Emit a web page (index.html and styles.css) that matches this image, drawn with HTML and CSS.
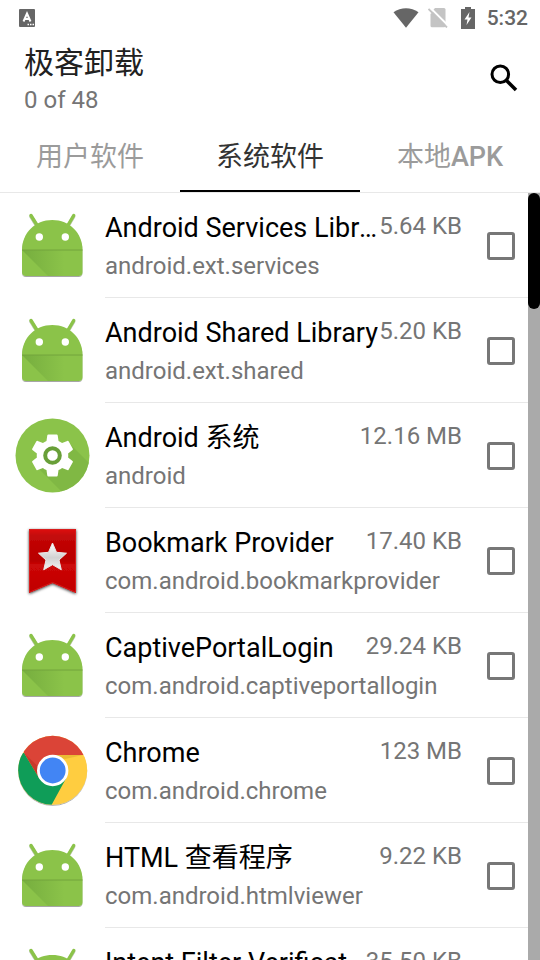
FILE: index.html
```html
<!DOCTYPE html>
<html lang="zh-CN">
<head>
<meta charset="utf-8">
<meta name="viewport" content="width=device-width, initial-scale=1">
<title>极客卸载</title>
<link rel="stylesheet" href="styles.css">
</head>
<body>
<svg class="defs" aria-hidden="true">
  <defs>
    <linearGradient id="fold" x1="0" y1="0" x2="1" y2="0">
      <stop offset="0" stop-color="#33691e" stop-opacity=".24"/>
      <stop offset=".7" stop-color="#33691e" stop-opacity="0"/>
    </linearGradient>
    <linearGradient id="ribbon" x1="0" y1="0" x2="0" y2="1">
      <stop offset="0" stop-color="#e01010"/>
      <stop offset=".1" stop-color="#c40808"/>
      <stop offset=".5" stop-color="#b80000"/>
      <stop offset=".56" stop-color="#cc0808"/>
      <stop offset="1" stop-color="#c00000"/>
    </linearGradient>
    <linearGradient id="silver" x1="0" y1="0" x2="0" y2="1">
      <stop offset="0" stop-color="#ffffff"/>
      <stop offset=".55" stop-color="#d2d2d2"/>
      <stop offset="1" stop-color="#f4f4f4"/>
    </linearGradient>
    <clipPath id="disc"><circle cx="37.5" cy="37.5" r="37"/></clipPath>
    <clipPath id="ball"><circle cx="37.7" cy="37.3" r="34.5"/></clipPath>
    <filter id="shade" x="-20%" y="-20%" width="140%" height="140%">
      <feDropShadow dx="0" dy="1" stdDeviation="1.4" flood-color="#000" flood-opacity=".8"/>
    </filter>
    <filter id="soft" x="-20%" y="-20%" width="140%" height="140%">
      <feDropShadow dx="0" dy="1" stdDeviation=".6" flood-color="#000" flood-opacity=".35"/>
    </filter>
    <symbol id="robot" viewBox="0 0 75 75">
      <g filter="url(#soft)">
        <path d="M16 7.500 22.500 18M58.700 7.500 52.500 18" stroke="#8bc34a" stroke-width="3.400" stroke-linecap="round"/>
        <path d="M7 42C7 25 20 12 37.300 12S67.500 25 67.500 42V64a4 4 0 0 1-4 4H11a4 4 0 0 1-4-4Z" fill="#8bc34a"/>
      </g>
      <path d="M7 42H67.500V64a4 4 0 0 1-4 4H33Z" fill="url(#fold)"/>
      <path d="M7 42H67.500" stroke="#72a43c"/>
      <circle cx="24.300" cy="29" r="3.700" fill="#fff"/>
      <circle cx="50.300" cy="29" r="3.700" fill="#fff"/>
    </symbol>
  </defs>
</svg>

<div class="app">
  <div class="status">
    <svg class="status-note" viewBox="0 0 16 18" aria-hidden="true">
      <rect width="16" height="18" rx="1" fill="#666"/>
      <path d="M4.500 12.500 8 4.500 11.500 12.500M5.800 10H10.200" fill="none" stroke="#fff" stroke-width="2"/>
      <path d="M8.500 15.500h1.500M11 15.500h1.500M13.500 15.500h1.500" stroke="#fff" stroke-width="1.500"/>
    </svg>
    <svg class="status-wifi" viewBox="0 0 26 20" aria-hidden="true">
      <path d="M.5 4.200C8-1 18-1 25.500 4.200L13 19.800Z" fill="#666"/>
    </svg>
    <svg class="status-sim" viewBox="0 0 20 20" aria-hidden="true">
      <path d="M7 0h9q1.500 0 1.500 1.500v17q0 .8-1.500.8H4q-1.500 0-1.500-1.500V5Z" fill="#c4c4c4"/>
      <path d="M1.500 -1 21 18.500" stroke="#fff" stroke-width="2"/>
      <path d="M0 2.500V0H2.500L5 4 2.500 6Z" fill="#fff"/>
      <path d="M.5 1 19 19.500" stroke="#c4c4c4" stroke-width="1.800"/>
    </svg>
    <svg class="status-battery" viewBox="0 0 14 22" aria-hidden="true">
      <path d="M4 0h6v2h4v20H0V2h4Z" fill="#666"/>
      <path d="M8.500 5 3.500 12.500H6.500L5.500 18 10.500 10.500H7.500Z" fill="#fff"/>
    </svg>
    <span class="clock">5:32</span>
  </div>

  <header class="header">
    <div>
      <h1 class="title">极客卸载</h1>
      <p class="count">0 of 48</p>
    </div>
    <button class="search" type="button" aria-label="搜索">
      <svg viewBox="0 0 36 36" aria-hidden="true">
        <circle cx="14.300" cy="14.300" r="8.300" fill="none" stroke="#000" stroke-width="3"/>
        <path d="M20 20 30 30" stroke="#000" stroke-width="3.500"/>
      </svg>
    </button>
  </header>

  <nav class="tabs">
    <a class="tab" href="#user">用户软件</a>
    <a class="tab tab-active" href="#system" aria-current="page">系统软件</a>
    <a class="tab" href="#local">本地<b class="latin">APK</b></a>
  </nav>

  <main class="content">
    <ul class="list">
      <li class="row">
        <svg class="icon" aria-hidden="true"><use href="#robot"/></svg>
        <div class="body">
          <label class="text" for="a1"><span class="line"><span class="name">Android Services Library</span><span class="size">5.64 KB</span></span><span class="package">android.ext.services</span></label>
          <input class="check" type="checkbox" id="a1">
        </div>
      </li>
      <li class="row">
        <svg class="icon" aria-hidden="true"><use href="#robot"/></svg>
        <div class="body">
          <label class="text" for="a2"><span class="line"><span class="name">Android Shared Library</span><span class="size">5.20 KB</span></span><span class="package">android.ext.shared</span></label>
          <input class="check" type="checkbox" id="a2">
        </div>
      </li>
      <li class="row">
        <svg class="icon" viewBox="0 0 75 75" aria-hidden="true">
          <circle cx="37.500" cy="37.500" r="37" fill="#8bc34a"/>
          <path d="M24 51 48 75H75V46L55 26Z" fill="#7cb342" opacity=".7" clip-path="url(#disc)"/>
          <g transform="translate(12.300 12.300) scale(2.100)">
            <path fill="#fff" d="M19.430 12.980c.04-.32.07-.64.07-.98s-.03-.66-.07-.98l2.110-1.650c.19-.15.24-.42.12-.64l-2-3.460c-.12-.22-.39-.3-.61-.22l-2.490 1c-.52-.4-1.080-.73-1.690-.98l-.38-2.650C14.460 2.180 14.250 2 14 2h-4c-.25 0-.46.18-.49.42l-.38 2.650c-.61.25-1.170.59-1.690.98l-2.490-1c-.23-.09-.49 0-.61.22l-2 3.460c-.13.22-.07.49.12.64l2.110 1.650c-.04.32-.07.65-.07.98s.03.66.07.98l-2.110 1.650c-.19.15-.24.42-.12.64l2 3.460c.12.22.39.3.61.22l2.490-1c.52.4 1.080.73 1.690.98l.38 2.650c.03.24.24.42.49.42h4c.25 0 .46-.18.49-.42l.38-2.650c.61-.25 1.170-.59 1.690-.98l2.490 1c.23.09.49 0 .61-.22l2-3.460c.12-.22.07-.49-.12-.64Z"/>
          </g>
          <circle cx="37.500" cy="37.500" r="7.300" fill="#fff" stroke="#689f38" stroke-width="4"/>
        </svg>
        <div class="body">
          <label class="text" for="a3"><span class="line"><span class="name">Android 系统</span><span class="size">12.16 MB</span></span><span class="package">android</span></label>
          <input class="check" type="checkbox" id="a3">
        </div>
      </li>
      <li class="row">
        <svg class="icon" viewBox="0 0 75 75" aria-hidden="true">
          <path d="M14 6H61V70L37.600 60 14 70Z" fill="url(#ribbon)" filter="url(#shade)"/>
          <path d="M14.500 6.500H60.500V69.200L37.600 59.400 14.500 69.200Z" fill="none" stroke="#d81c1c"/>
          <path d="M37.500 20 41.500 29.300 51.500 30.200 44 37 46.300 46.800 37.500 41.700 28.700 46.800 31 37 23.500 30.200 33.500 29.300Z" fill="url(#silver)" stroke="#e8e8e8" stroke-linejoin="round"/>
        </svg>
        <div class="body">
          <label class="text" for="a4"><span class="line"><span class="name">Bookmark Provider</span><span class="size">17.40 KB</span></span><span class="package">com.android.bookmarkprovider</span></label>
          <input class="check" type="checkbox" id="a4">
        </div>
      </li>
      <li class="row">
        <svg class="icon" aria-hidden="true"><use href="#robot"/></svg>
        <div class="body">
          <label class="text" for="a5"><span class="line"><span class="name">CaptivePortalLogin</span><span class="size">29.24 KB</span></span><span class="package">com.android.captiveportallogin</span></label>
          <input class="check" type="checkbox" id="a5">
        </div>
      </li>
      <li class="row">
        <svg class="icon" viewBox="0 0 75 75" aria-hidden="true">
          <circle cx="37.700" cy="37.300" r="34.500" fill="#ffcd40" filter="url(#soft)"/>
          <g clip-path="url(#ball)">
            <path d="M0 0H75V22H37.700L24 45 9 20Z" fill="#db4437"/>
            <path d="M9 20 24 45 37.700 53 51 45.500 36.500 72V75H0V20Z" fill="#0f9d58"/>
            <path d="M37.700 22H68L50 26Z" fill="#c79a20" opacity=".35"/>
            <path d="M9 20 24 45 22.500 33Z" fill="#a52714" opacity=".35"/>
          </g>
          <circle cx="37.700" cy="37.500" r="14.300" fill="#4285f4" stroke="#fff" stroke-width="2.800"/>
        </svg>
        <div class="body">
          <label class="text" for="a6"><span class="line"><span class="name">Chrome</span><span class="size">123 MB</span></span><span class="package">com.android.chrome</span></label>
          <input class="check" type="checkbox" id="a6">
        </div>
      </li>
      <li class="row">
        <svg class="icon" aria-hidden="true"><use href="#robot"/></svg>
        <div class="body">
          <label class="text" for="a7"><span class="line"><span class="name">HTML 查看程序</span><span class="size">9.22 KB</span></span><span class="package">com.android.htmlviewer</span></label>
          <input class="check" type="checkbox" id="a7">
        </div>
      </li>
      <li class="row">
        <svg class="icon" aria-hidden="true"><use href="#robot"/></svg>
        <div class="body">
          <label class="text" for="a8"><span class="line"><span class="name">Intent Filter Verification Service</span><span class="size">35.50 KB</span></span><span class="package">com.android.statementservice</span></label>
          <input class="check" type="checkbox" id="a8">
        </div>
      </li>
    </ul>
    <div class="track"><div class="thumb"></div></div>
  </main>
</div>
</body>
</html>
```
FILE: styles.css
```css
* {
  box-sizing: border-box;
}

body {
  margin: 0;
  background: #fff;
  color: #000;
  font-family: Roboto, "Noto Sans CJK SC", sans-serif;
}

.defs {
  position: absolute;
  width: 0;
  height: 0;
}

.app {
  display: flex;
  flex-direction: column;
  height: 100vh;
  overflow: hidden;
}

.status {
  display: flex;
  align-items: center;
  height: 36px;
  padding: 0 12px 0 19px;
}

.status-note {
  width: 16px;
  height: 18px;
  margin-right: auto;
}

.status-wifi {
  width: 26px;
  height: 20px;
  margin-right: 9px;
}

.status-sim {
  width: 20px;
  height: 20px;
  margin-right: 13px;
}

.status-battery {
  width: 14px;
  height: 22px;
  margin-right: 12px;
}

.clock {
  color: #666;
  font-size: 21px;
  font-weight: 500;
  line-height: 38px;
}

.header {
  display: flex;
  align-items: center;
  justify-content: space-between;
  height: 84px;
  padding: 0 18px 0 24px;
}

.title,
.count {
  margin: 0;
  font-weight: 400;
}

.title {
  padding-top: 4px;
  color: #212121;
  font-size: 30px;
  line-height: 40px;
}

.count {
  color: #757575;
  font-size: 24px;
  line-height: 34px;
}

.search {
  width: 36px;
  height: 36px;
  padding: 0;
  border: 0;
  background: none;
}

.search svg {
  display: block;
  width: 36px;
  height: 36px;
}

.tabs {
  display: flex;
  height: 73px;
  border-bottom: 1px solid #e8e8e8;
}

.tab {
  flex: 1;
  padding-top: 2px;
  border-bottom: 2px solid transparent;
  color: #9b9b9b;
  font-size: 27px;
  line-height: 70px;
  text-align: center;
  text-decoration: none;
}

.tab-active {
  border-bottom-color: #000;
  color: #333;
}

.latin {
  font-weight: 500;
}

.content {
  display: flex;
  flex: 1;
  min-height: 0;
}

.list {
  flex: 1;
  min-width: 0;
  margin: 0;
  padding: 0;
  overflow: hidden;
  list-style: none;
}

.row {
  display: flex;
  align-items: center;
  height: 105px;
  padding-left: 15px;
}

.icon {
  flex: none;
  width: 75px;
  height: 75px;
  margin-right: 15px;
}

.body {
  display: flex;
  flex: 1;
  align-items: center;
  gap: 25px;
  min-width: 0;
  height: 105px;
  padding: 2px 13px 0 0;
  border-bottom: 1px solid #e8e8e8;
}

.text {
  flex: 1;
  min-width: 0;
}

.line {
  display: flex;
  justify-content: space-between;
  height: 40px;
}

.name {
  overflow: hidden;
  font-size: 27px;
  line-height: 40px;
  text-overflow: ellipsis;
  white-space: nowrap;
}

.size {
  flex: none;
  color: #757575;
  font-size: 24px;
  line-height: 36px;
}

.package {
  display: block;
  color: #757575;
  font-size: 24px;
  line-height: 36px;
}

.check {
  flex: none;
  width: 28px;
  height: 28px;
  margin: 0;
  border: 3px solid #777;
  border-radius: 3px;
  appearance: none;
}

.check:checked {
  background: #777;
}

.track {
  flex: none;
  width: 12px;
  background: #aaa;
}

.thumb {
  height: 116px;
  border-radius: 6px;
  background: #000;
}
```
